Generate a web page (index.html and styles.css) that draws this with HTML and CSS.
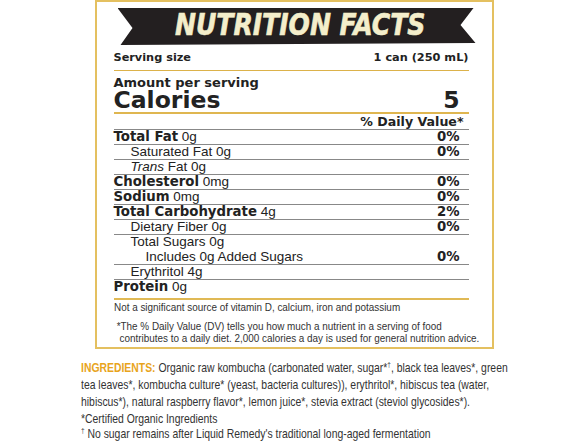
FILE: index.html
```html
<!DOCTYPE html>
<html lang="en">
<head>
    <meta charset="UTF-8">
    <meta name="viewport" content="width=device-width, initial-scale=1.0">
    <title>Nutrition Facts</title>
    <link rel="stylesheet" href="styles.css">
</head>
<body>
    <div class="label">
        <div class="banner"><span>NUTRITION FACTS</span></div>
        <div class="serving">
            <span>Serving size</span>
            <span>1 can (250 mL)</span>
        </div>
        <div class="amount">Amount per serving</div>
        <div class="calories">
            <span>Calories</span>
            <span>5</span>
        </div>
        <div class="dv-head">% Daily Value*</div>
        <ul class="nutrients">
            <li class="row"><span><b>Total Fat</b> 0g</span><b>0%</b></li>
            <li class="row sub"><span>Saturated Fat 0g</span><b>0%</b></li>
            <li class="row sub"><span><i>Trans</i> Fat 0g</span></li>
            <li class="row"><span><b>Cholesterol</b> 0mg</span><b>0%</b></li>
            <li class="row"><span><b>Sodium</b> 0mg</span><b>0%</b></li>
            <li class="row"><span><b>Total Carbohydrate</b> 4g</span><b>2%</b></li>
            <li class="row sub"><span>Dietary Fiber 0g</span><b>0%</b></li>
            <li class="row sub no-line"><span>Total Sugars 0g</span></li>
            <li class="row subsub"><span>Includes 0g Added Sugars</span><b>0%</b></li>
            <li class="row sub"><span>Erythritol 4g</span></li>
            <li class="row last"><span><b>Protein</b> 0g</span></li>
        </ul>
        <div class="notes">
            <p class="note">Not a significant source of vitamin D, calcium, iron and potassium</p>
            <p class="note dv-note">*The % Daily Value (DV) tells you how much a nutrient in a serving of food<br>&nbsp;contributes to a daily diet. 2,000 calories a day is used for general nutrition advice.</p>
        </div>
    </div>

    <div class="ingredients">
        <p class="list"><span class="title">INGREDIENTS:</span> Organic raw kombucha (carbonated water, sugar*<sup>†</sup>, black tea leaves*, green<br>tea leaves*, kombucha culture* (yeast, bacteria cultures)), erythritol*, hibiscus tea (water,<br>hibiscus*), natural raspberry flavor*, lemon juice*, stevia extract (steviol glycosides*).</p>
        <p class="foot">*Certified Organic Ingredients<br><sup>†</sup> No sugar remains after Liquid Remedy's traditional long-aged fermentation</p>
    </div>
</body>
</html>
```

FILE: styles.css
```css
body {
    margin: 0;
    font-family: "Liberation Sans", Arial, sans-serif;
    color: #222;
    background: #fff;
    overflow: hidden;
}
.label {
    width: 355px;
    margin: 0 auto;
    padding: 6px 23px 3px 17px;
    border: 2px solid #e4c060;
}
.banner {
    width: 358px;
    height: 37px;
    margin-left: 4px;
    background: #231f20;
    display: flex;
    align-items: center;
    justify-content: center;
    clip-path: polygon(0 0, 356px 0, 343px 17px, 358px 35px, 3px 37px, 15px 20px);
}
.banner span {
    font-family: "DejaVu Sans Condensed", "DejaVu Sans", sans-serif;
    font-weight: bold;
    font-style: italic;
    font-size: 31px;
    line-height: 1;
    color: #f4eecb;
    margin: -4px 0 0 8px;
    transform: scaleX(0.9);
    -webkit-text-stroke: 0.6px #f4eecb;
}
.serving {
    display: flex;
    justify-content: space-between;
    margin-top: 5px;
    padding-bottom: 4px;
    border-bottom: 1px solid #dcb24a;
    font-family: "DejaVu Sans", sans-serif;
    font-weight: bold;
    font-size: 11.3px;
    line-height: 16px;
}
.amount {
    padding-top: 5px;
    font-family: "DejaVu Sans", sans-serif;
    font-weight: bold;
    font-size: 13px;
    line-height: 13px;
}
.calories {
    display: flex;
    justify-content: space-between;
    padding: 1px 9px 2px 0;
    border-bottom: 2px solid #dfb650;
    font-family: "DejaVu Sans", sans-serif;
    font-weight: bold;
    font-size: 23.5px;
    line-height: 20px;
}
.dv-head {
    text-align: right;
    padding: 1px 5px 0 0;
    border-bottom: 1px solid #888;
    font-family: "DejaVu Sans", sans-serif;
    font-weight: bold;
    font-size: 12.6px;
    line-height: 14px;
}
.nutrients {
    list-style: none;
    margin: 0;
    padding: 0;
}
.row {
    display: flex;
    justify-content: space-between;
    padding-right: 9px;
    border-bottom: 1px solid #888;
    font-size: 13.5px;
    line-height: 14px;
}
.row b {
    font-family: "DejaVu Sans", sans-serif;
    font-size: 13.3px;
}
.row.sub {
    padding-left: 17px;
}
.row.subsub {
    padding-left: 32px;
}
.row.no-line {
    border-bottom: none;
    padding-bottom: 1px;
}
.row.last {
    padding-bottom: 4px;
    border-bottom: 2px solid #e0b955;
}
.notes {
    transform: scaleX(0.9);
    transform-origin: left top;
    white-space: nowrap;
    color: #333;
}
.note {
    margin: 0;
    padding-top: 1px;
    font-size: 11px;
    line-height: 13px;
}
.dv-note {
    margin-top: 6px;
    padding: 0 0 0 3px;
    line-height: 12px;
}
.ingredients {
    margin: 10px 0 0 81px;
    color: #333;
    white-space: nowrap;
    transform: scaleX(0.8);
    transform-origin: left top;
}
.ingredients p {
    margin: 0;
}
.list {
    font-size: 13px;
    line-height: 17px;
}
.title {
    color: #e8a41c;
    font-weight: bold;
}
.foot {
    margin-top: 1px !important;
    font-size: 13px;
    line-height: 15px;
}
sup {
    font-size: 8px;
    line-height: 0;
    vertical-align: 5px;
}
```
